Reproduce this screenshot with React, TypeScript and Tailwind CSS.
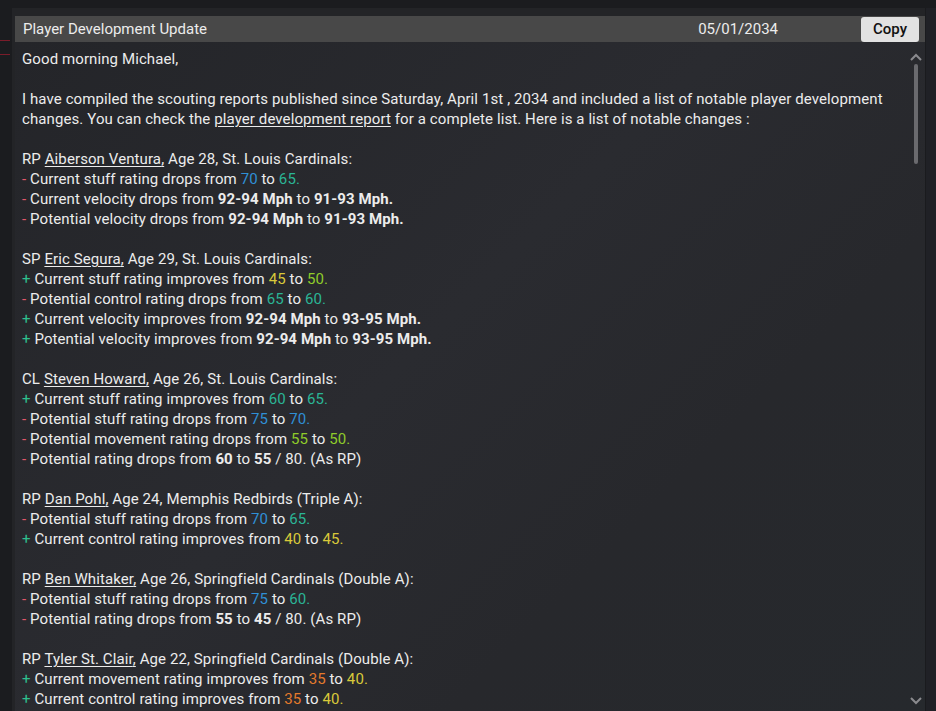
import React from "react";

const B = "text-[#2f8fd6]"; // blue
const T = "text-[#2bb596]"; // teal
const Y = "text-[#d9c93a]"; // yellow
const G = "text-[#8fcc2a]"; // yellow green
const O = "text-[#e47a2c]"; // orange

function Minus() {
  return <span className="text-[#e0586c]">- </span>;
}
function Plus() {
  return <span className="text-[#2ec08e]">+ </span>;
}
function Num({ c, v }: { c: string; v: string }) {
  return <span className={c}>{v}</span>;
}
function Name({ n }: { n: string }) {
  return <span className="underline underline-offset-2">{n},</span>;
}

export default function App() {
  return (
    <div
      className="w-[936px] h-[711px] overflow-hidden flex bg-[#1b1c1f] text-[#ececec]"
      style={{ fontFamily: "Roboto, 'Noto Sans', sans-serif" }}
    >
      <div className="w-[12px] shrink-0 flex flex-col pt-[40px] gap-[13px]">
        <div className="h-px w-[10px] bg-[#7a1c2a]" />
        <div className="h-px w-[10px] bg-[#7a1c2a]" />
      </div>
      <div className="flex-1 mt-[8px] bg-[#232427] pl-[3px] pt-[8px] flex flex-col">
        <div className="h-[26px] bg-[#484848] flex items-center pl-[8px] pr-[6px] text-[15px]">
          <div className="flex-1">Player Development Update</div>
          <div className="mr-[83px]">05/01/2034</div>
          <button className="h-[25px] w-[58px] rounded-[3px] bg-[#e2e2e2] text-[#111] text-[15px] font-medium mt-[1px]">
            Copy
          </button>
        </div>
        <div
          className="flex-1 flex bg-[#27282c]"
          style={{ backgroundImage: "linear-gradient(135deg, #242529 0%, #2a2b30 45%, #27282c 70%, #26292d 100%)" }}
        >
          <div className="flex-1 pl-[7px] pt-[7px] text-[15px] tracking-[0.1px] leading-[20px]">
            <div>Good morning Michael,</div>
            <div className="h-[20px]" />
            <div className="pr-[10px]">
              I have compiled the scouting reports published since Saturday, April 1st , 2034 and included a list of notable player development changes. You can check the{" "}
              <span className="underline underline-offset-2">player development report</span> for a complete list. Here is a list of notable changes :
            </div>
            <div className="h-[20px]" />
            <div>RP <Name n="Aiberson Ventura" /> Age 28, St. Louis Cardinals:</div>
            <div><Minus />Current stuff rating drops from <Num c={B} v="70" /> to <Num c={T} v="65." /></div>
            <div><Minus />Current velocity drops from <b>92-94 Mph</b> to <b>91-93 Mph.</b></div>
            <div><Minus />Potential velocity drops from <b>92-94 Mph</b> to <b>91-93 Mph.</b></div>
            <div className="h-[20px]" />
            <div>SP <Name n="Eric Segura" /> Age 29, St. Louis Cardinals:</div>
            <div><Plus />Current stuff rating improves from <Num c={Y} v="45" /> to <Num c={G} v="50." /></div>
            <div><Minus />Potential control rating drops from <Num c={T} v="65" /> to <Num c={T} v="60." /></div>
            <div><Plus />Current velocity improves from <b>92-94 Mph</b> to <b>93-95 Mph.</b></div>
            <div><Plus />Potential velocity improves from <b>92-94 Mph</b> to <b>93-95 Mph.</b></div>
            <div className="h-[20px]" />
            <div>CL <Name n="Steven Howard" /> Age 26, St. Louis Cardinals:</div>
            <div><Plus />Current stuff rating improves from <Num c={T} v="60" /> to <Num c={T} v="65." /></div>
            <div><Minus />Potential stuff rating drops from <Num c={B} v="75" /> to <Num c={B} v="70." /></div>
            <div><Minus />Potential movement rating drops from <Num c={G} v="55" /> to <Num c={G} v="50." /></div>
            <div><Minus />Potential rating drops from <b>60</b> to <b>55</b> / 80. (As RP)</div>
            <div className="h-[20px]" />
            <div>RP <Name n="Dan Pohl" /> Age 24, Memphis Redbirds (Triple A):</div>
            <div><Minus />Potential stuff rating drops from <Num c={B} v="70" /> to <Num c={T} v="65." /></div>
            <div><Plus />Current control rating improves from <Num c={Y} v="40" /> to <Num c={Y} v="45." /></div>
            <div className="h-[20px]" />
            <div>RP <Name n="Ben Whitaker" /> Age 26, Springfield Cardinals (Double A):</div>
            <div><Minus />Potential stuff rating drops from <Num c={B} v="75" /> to <Num c={T} v="60." /></div>
            <div><Minus />Potential rating drops from <b>55</b> to <b>45</b> / 80. (As RP)</div>
            <div className="h-[20px]" />
            <div>RP <Name n="Tyler St. Clair" /> Age 22, Springfield Cardinals (Double A):</div>
            <div><Plus />Current movement rating improves from <Num c={O} v="35" /> to <Num c={Y} v="40." /></div>
            <div><Plus />Current control rating improves from <Num c={O} v="35" /> to <Num c={Y} v="40." /></div>
          </div>
          <div className="w-[18px] shrink-0 flex flex-col items-center pt-[11px] pb-[6px]">
            <svg width="14" height="9" viewBox="0 0 14 9" className="shrink-0">
              <path d="M2 7 L7 2 L12 7" stroke="#8a8a8e" strokeWidth="2" fill="none" />
            </svg>
            <div className="mt-[2px] w-[4px] h-[100px] rounded-full bg-[#6a6a6e]" />
            <div className="flex-1" />
            <svg width="14" height="9" viewBox="0 0 14 9" className="shrink-0">
              <path d="M2 2 L7 7 L12 2" stroke="#8a8a8e" strokeWidth="2" fill="none" />
            </svg>
          </div>
        </div>
      </div>
      <div className="w-[11px] shrink-0 mt-[8px] bg-[#202126] border-l border-[#1a1b1e]" />
    </div>
  );
}
